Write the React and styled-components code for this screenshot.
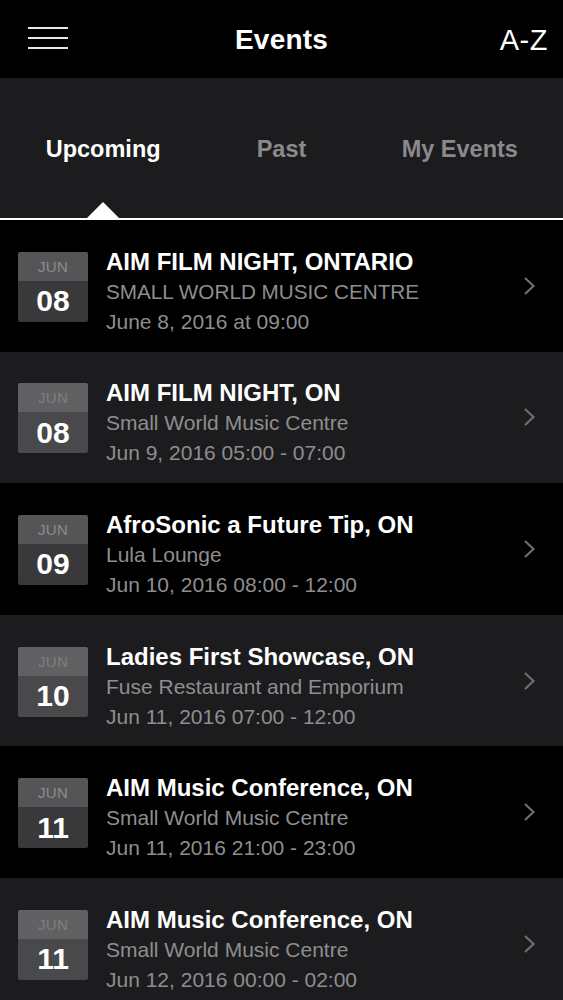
import React from "react";
import styled, { createGlobalStyle } from "styled-components";

const GlobalStyle = createGlobalStyle`
  html, body {
    margin: 0;
    padding: 0;
    background: #000;
  }
  body {
    font-family: "Liberation Sans", Arial, sans-serif;
    -webkit-font-smoothing: antialiased;
  }
`;

const Screen = styled.div`
  width: 563px;
  height: 1000px;
  overflow: hidden;
  background: #000;
  color: #fff;
`;

const NavBar = styled.header`
  height: 78px;
  display: grid;
  grid-template-columns: 1fr auto 1fr;
  align-items: center;
  padding: 2px 15px 0;
  box-sizing: border-box;
  background: #000;
`;

const Burger = styled.button`
  width: 40px;
  height: 22px;
  padding: 0;
  margin: -4px 0 0 13px;
  border: none;
  background: none;
  display: flex;
  flex-direction: column;
  justify-content: space-between;

  span {
    display: block;
    height: 2px;
    background: #e8e8e8;
  }
`;

const Title = styled.h1`
  margin: 0;
  font-size: 28px;
  font-weight: 700;
  letter-spacing: 0.2px;
`;

const SortButton = styled.span`
  justify-self: end;
  font-size: 29px;
  font-weight: 400;
  letter-spacing: 0.5px;
`;

const TabBar = styled.nav`
  height: 140px;
  display: grid;
  grid-template-columns: repeat(3, 1fr);
  padding: 0 14px;
  background: #1c1c1e;
  border-bottom: 2px solid #fff;
`;

const Tab = styled.div`
  position: relative;
  display: flex;
  align-items: center;
  justify-content: center;
  font-size: 23.5px;
  font-weight: 700;
  color: ${(p) => (p.$active ? "#fff" : "#8a8a8c")};
  padding-top: 3px;

  &::after {
    content: "";
    display: ${(p) => (p.$active ? "block" : "none")};
    position: absolute;
    bottom: 0;
    left: 50%;
    margin-left: -16px;
    border-left: 16px solid transparent;
    border-right: 16px solid transparent;
    border-bottom: 16px solid #fff;
  }
`;

const List = styled.ul`
  margin: 0;
  padding: 0;
  list-style: none;
`;

const Row = styled.li`
  height: 131.6px;
  display: flex;
  align-items: center;
  padding: 0 27px 0 18px;
  box-sizing: border-box;
  background: ${(p) => (p.$shade ? "#1c1c1e" : "#000")};
`;

const DateBadge = styled.div`
  width: 70px;
  height: 70px;
  flex-shrink: 0;
  border-radius: 2px;
  overflow: hidden;
  display: grid;
  grid-template-rows: 29px 41px;
  margin-top: 2px;
`;

const Month = styled.div`
  display: flex;
  align-items: center;
  justify-content: center;
  font-size: 15px;
  letter-spacing: 0.3px;
  background: ${(p) => (p.$shade ? "#616163" : "#555557")};
  color: ${(p) => (p.$shade ? "#7e7e80" : "#8c8c8e")};
`;

const Day = styled.div`
  display: flex;
  align-items: center;
  justify-content: center;
  font-size: 30px;
  font-weight: 700;
  background: ${(p) => (p.$shade ? "#49494b" : "#39393b")};
  color: #fff;
`;

const Info = styled.div`
  flex: 1;
  min-width: 0;
  margin-left: 18px;
  margin-top: 12px;
  display: flex;
  flex-direction: column;
`;

const EventName = styled.div`
  font-size: 24px;
  font-weight: 700;
  line-height: 30px;
  white-space: nowrap;
`;

const Detail = styled.div`
  font-size: ${(p) => (p.$small ? "20.7px" : "21px")};
  line-height: 30px;
  color: #8e8e90;
  white-space: nowrap;
`;

const Chevron = styled.svg`
  flex-shrink: 0;
  width: 13px;
  height: 20px;
`;

const events = [
  { month: "JUN", day: "08", name: "AIM FILM NIGHT, ONTARIO", venue: "SMALL WORLD MUSIC CENTRE", when: "June 8, 2016 at 09:00" },
  { month: "JUN", day: "08", name: "AIM FILM NIGHT, ON", venue: "Small World Music Centre", when: "Jun 9, 2016 05:00 - 07:00" },
  { month: "JUN", day: "09", name: "AfroSonic a Future Tip, ON", venue: "Lula Lounge", when: "Jun 10, 2016 08:00 - 12:00" },
  { month: "JUN", day: "10", name: "Ladies First Showcase, ON", venue: "Fuse Restaurant and Emporium", when: "Jun 11, 2016 07:00 - 12:00" },
  { month: "JUN", day: "11", name: "AIM Music Conference, ON", venue: "Small World Music Centre", when: "Jun 11, 2016 21:00 - 23:00" },
  { month: "JUN", day: "11", name: "AIM Music Conference, ON", venue: "Small World Music Centre", when: "Jun 12, 2016 00:00 - 02:00" },
];

const App = () => {
  return (
    <Screen>
      <GlobalStyle />
      <NavBar>
        <Burger aria-label="Menu">
          <span />
          <span />
          <span />
        </Burger>
        <Title>Events</Title>
        <SortButton>A-Z</SortButton>
      </NavBar>

      <TabBar>
        <Tab $active>Upcoming</Tab>
        <Tab>Past</Tab>
        <Tab>My Events</Tab>
      </TabBar>

      <List>
        {events.map((ev, i) => {
          const shade = i % 2 === 1;
          return (
            <Row key={i} $shade={shade}>
              <DateBadge>
                <Month $shade={shade}>{ev.month}</Month>
                <Day $shade={shade}>{ev.day}</Day>
              </DateBadge>
              <Info>
                <EventName>{ev.name}</EventName>
                <Detail $small={ev.venue === ev.venue.toUpperCase()}>{ev.venue}</Detail>
                <Detail>{ev.when}</Detail>
              </Info>
              <Chevron viewBox="0 0 13 20">
                <polyline points="2,2 10.5,10 2,18" fill="none" stroke="#6e6e70" strokeWidth="2.2" />
              </Chevron>
            </Row>
          );
        })}
      </List>
    </Screen>
  );
};

export default App;
